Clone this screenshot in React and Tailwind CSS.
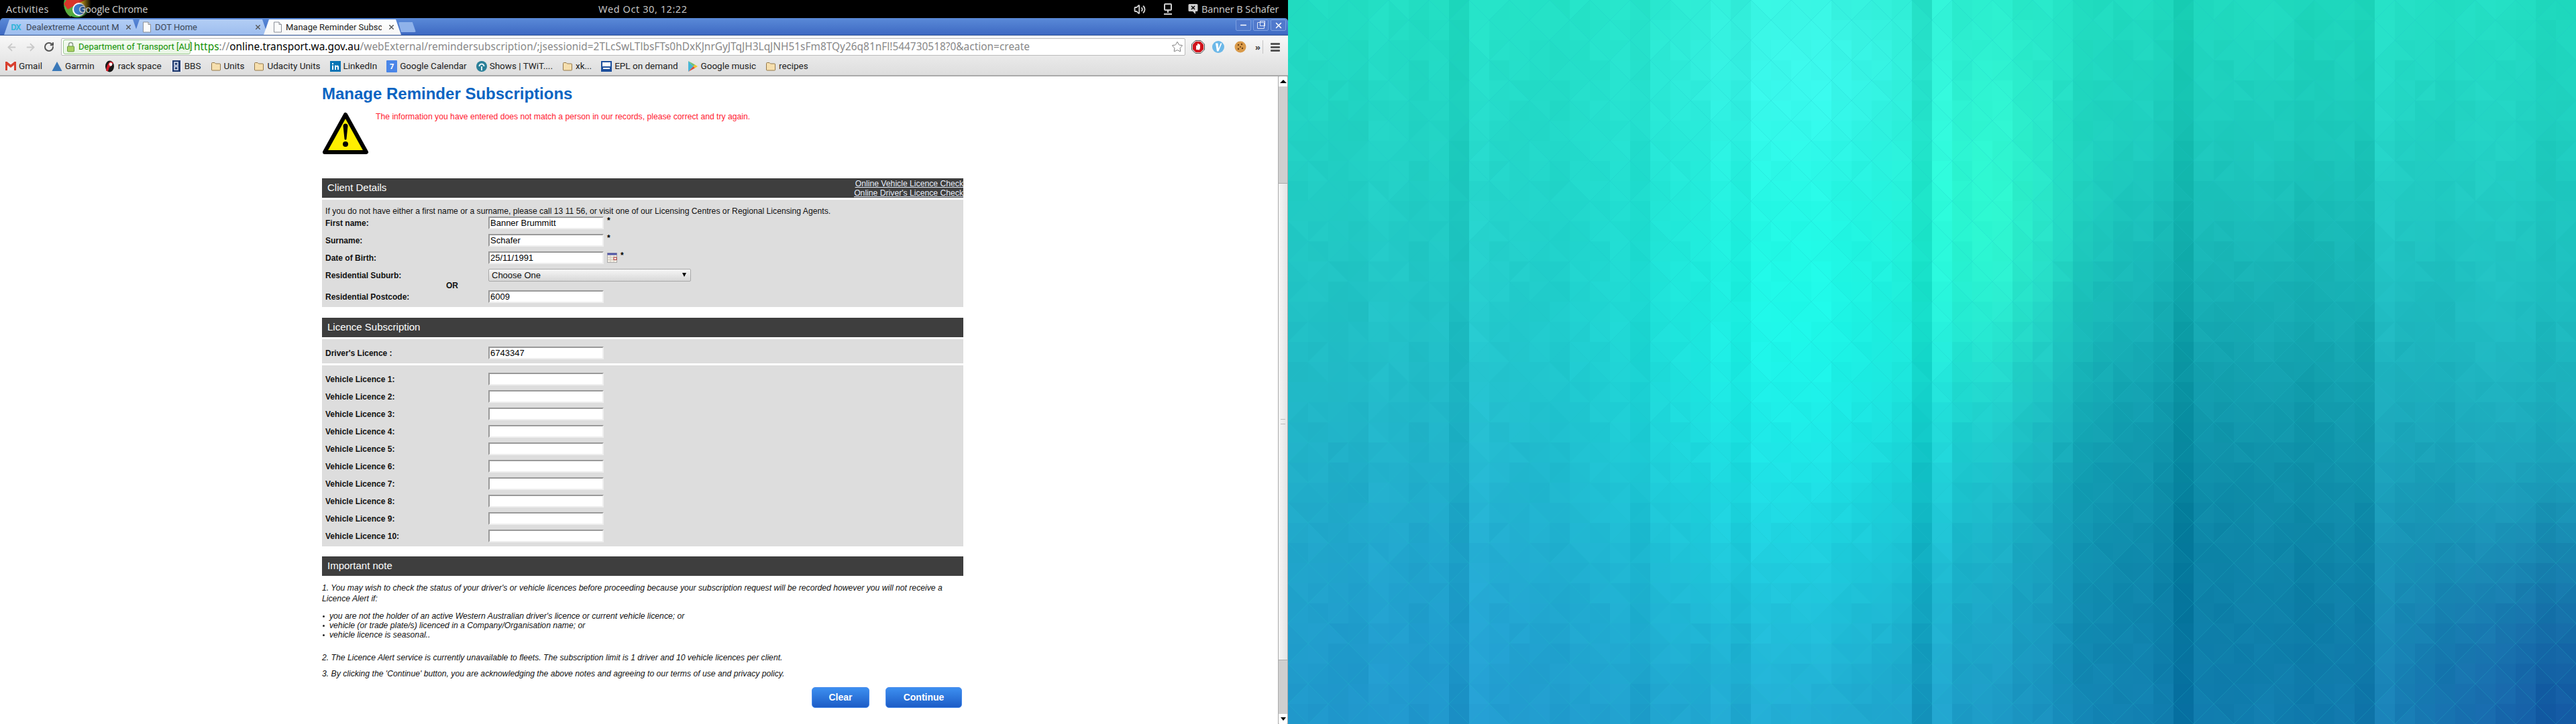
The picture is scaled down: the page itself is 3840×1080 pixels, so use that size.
import { ArrowLeft, ArrowRight, RotateCw, Star, X, Minus, Volume2 } from "lucide-react";

const COLUMN_SHADE = [0, 0, -1, -1, 3, 2, -1, 1, -7, 8, 4, 3, 2, 0, 2, 2, 3, -3, 3, 3, 2, 6, -1, 8, 7, 7, 8, 5, 4, 4, 3, -12, 10, 2, 6, 8, 4, 5, 2, -3, -2, -2, 0, -4, -14, -1, -2, -1, 0, -2, -6, -5, -4, -8, 8, 3, 2, 0, 2, 3, 2, 0, -5, -3];

const blob = (u, v, cu, cv, su, sv) => Math.exp(-((u - cu) ** 2) / (2 * su * su) - ((v - cv) ** 2) / (2 * sv * sv));

function tileColor(x, y, noise) {
  const u = x / 1920;
  const v = y / 1080;
  let r = 34 - 2 * v;
  let g = 222 - 66 * v;
  let b = 194 + 6 * v;
  const add = (amount, dr, dg, db) => {
    r += amount * dr;
    g += amount * dg;
    b += amount * db;
  };
  add(blob(u, v, 0.4, 0.5, 0.11, 0.28), -8, 50, 30);
  add(blob(u, v, 0.4, 0.08, 0.08, 0.12), 24, 8, 24);
  add(blob(u, v, 0.55, 0.33, 0.045, 0.18), 12, 28, 0);
  add(blob(u, v, 0.72, 0.78, 0.13, 0.32), -18, -38, -30);
  add(blob(u, v, 1, 1, 0.09, 0.2), -8, -60, -30);
  add(blob(u, v, 0.1, 0.85, 0.12, 0.2), 0, -8, 6);
  const shade = COLUMN_SHADE[Math.floor(x / 30)] + noise;
  const clamp = (n) => Math.round(Math.max(0, Math.min(255, n)));
  return `rgb(${clamp(r + shade * 0.7)},${clamp(g + shade)},${clamp(b + shade)})`;
}

function Wallpaper() {
  const tiles = [];
  for (let i = 0; i < 64; i++) {
    for (let j = 0; j < 36; j++) {
      const x = i * 30;
      const y = j * 30;
      const n1 = (((i * 7 + j * 13 + i * j * 3) % 9) - 4) * 0.5;
      const n2 = (((i * 11 + j * 5 + i * j * 7) % 9) - 4) * 0.5;
      const cx = x + 15;
      const cy = y + 15;
      const pts = (i + j) % 2 === 0
        ? [`${x},${y} ${x + 30},${y} ${x},${y + 30}`, `${x + 30},${y} ${x + 30},${y + 30} ${x},${y + 30}`]
        : [`${x},${y} ${x + 30},${y} ${x + 30},${y + 30}`, `${x},${y} ${x + 30},${y + 30} ${x},${y + 30}`];
      tiles.push(<polygon key={`${i}-${j}-a`} points={pts[0]} fill={tileColor(cx, cy, n1)} />);
      tiles.push(<polygon key={`${i}-${j}-b`} points={pts[1]} fill={tileColor(cx, cy, n2)} />);
    }
  }
  return (
    <svg width="1920" height="1080" viewBox="0 0 1920 1080" className="block">
      <rect width="1920" height="1080" fill="#20c0c8" />
      {tiles}
    </svg>
  );
}

function FolderIcon() {
  return (
    <svg width="16" height="16" viewBox="0 0 16 16" className="shrink-0">
      <path d="M1.500 3.500a1 1 0 0 1 1-1h3.500l1.500 1.500h6a1 1 0 0 1 1 1v8a1 1 0 0 1-1 1h-11a1 1 0 0 1-1-1z" fill="#f6dfae" stroke="#94784a" />
    </svg>
  );
}

function PageIcon({ className = "" }) {
  return (
    <svg width="14" height="17" viewBox="0 0 14 17" className={`shrink-0 ${className}`}>
      <path d="M1.500 1h7.500l3.500 3.500v11.500h-11z" fill="#fbfbfb" stroke="#8a8f98" />
      <path d="M9 1v3.500h3.500" fill="#e5e5e5" stroke="#8a8f98" />
    </svg>
  );
}

function ChromeLogo() {
  return (
    <svg width="44" height="27" viewBox="0 0 44 27" className="absolute left-[93px] top-0">
      <defs>
        <linearGradient id="logoFade" x1="0" x2="1" y1="0" y2="0">
          <stop offset="0.55" stopColor="#000" stopOpacity="0" />
          <stop offset="0.98" stopColor="#000" stopOpacity="1" />
        </linearGradient>
      </defs>
      <circle cx="22" cy="6" r="20" fill="#49a942" />
      <path d="M25 -14 A20 20 0 0 1 40 15 L26 10 Z" fill="#e8b820" />
      <path d="M3 8 L14 0 L24 0 L24 12 L12 25 A20 20 0 0 1 3 8Z" fill="#59ab3e" />
      <path d="M2 6 L14 -12 L22 -12 L34 0 L22 6 L8 14 Z" fill="#d8352a" />
      <circle cx="25" cy="14" r="10" fill="#fff" />
      <circle cx="25" cy="14" r="8" fill="#3d7ac8" />
      <rect width="44" height="27" fill="url(#logoFade)" />
    </svg>
  );
}

function Tab({ active, width, icon, children, className = "" }) {
  return (
    <div
      className={`relative flex h-[23px] items-center ${width} ${className} ${active ? "z-10 bg-gradient-to-b from-white to-[#f6f6f6] text-[#222]" : "bg-gradient-to-b from-[#b3ceF5] to-[#9dbdee] text-[#3c4756]"} [clip-path:polygon(0_100%,8px_0,calc(100%-8px)_0,100%_100%)]`}
    >
      {icon}
      <span className="ml-[5px] min-w-0 flex-1 overflow-hidden whitespace-nowrap font-['Roboto',sans-serif] text-[13px] leading-[23px]">{children}</span>
      <X size={11} strokeWidth={3} className="mx-[9px] shrink-0 text-[#555]" />
    </div>
  );
}

function Bookmark({ icon, children }) {
  return (
    <div className="flex items-center gap-[4px]">
      {icon}
      <span className="whitespace-nowrap font-['Roboto',sans-serif] text-[13.5px] text-[#222]">{children}</span>
    </div>
  );
}

function BrowserChrome() {
  return (
    <div className="shrink-0 font-['Noto_Sans',sans-serif]">
      {/* tab strip */}
      <div className="flex h-[26px] items-end rounded-t-[5px] border-b border-[#2d5192] bg-gradient-to-b from-[#5a8ad8] to-[#3e69c2] pl-[6px]">
        <Tab
          width="w-[200px]"
          icon={<span className="ml-[10px] w-[18px] shrink-0 text-[12px] font-bold leading-none tracking-[-1px] text-[#35b5d8]">DX</span>}
        >
          Dealextreme Account Ma
        </Tab>
        <Tab width="w-[199px] -ml-[6px]" icon={<PageIcon className="ml-[12px]" />}>DOT Home</Tab>
        <Tab active width="w-[205px] -ml-[6px]" icon={<PageIcon className="ml-[14px]" />}>Manage Reminder Subscr</Tab>
        <div className="ml-[-4px] mb-[4px] h-[15px] w-[26px] rounded-[2px] bg-[#8fb2ea] [clip-path:polygon(0_0,80%_0,100%_100%,15%_100%)]" />
        <div className="mb-[6px] ml-auto mr-[3px] flex gap-[3px] self-end">
          {[
            <Minus key="min" size={13} strokeWidth={3} />,
            <span key="max" className="relative block h-[10px] w-[11px] rounded-[1px] border border-white/80 after:absolute after:-right-[2px] after:-top-[3px] after:h-[8px] after:w-[8px] after:border after:border-white/80" />,
            <X key="close" size={14} strokeWidth={2.5} />
          ].map((glyph, i) => (
            <div key={i} className="flex h-[17px] w-[23px] items-center justify-center rounded-[2px] border border-[#7b9ee0] bg-[#5079cc] text-white">
              {glyph}
            </div>
          ))}
        </div>
      </div>

      <div className="bg-gradient-to-b from-[#f8f8f8] to-[#dcdcdc]">
        {/* toolbar */}
        <div className="flex h-[32px] items-center pt-[2px]">
          <ArrowLeft size={17} strokeWidth={2.5} className="ml-[9px] text-[#c9c9c9]" />
          <ArrowRight size={17} strokeWidth={2.5} className="ml-[11px] text-[#c9c9c9]" />
          <RotateCw size={16} strokeWidth={3} className="ml-[11px] text-[#555]" />
          <div className="ml-[10px] flex h-[26px] w-[1676px] items-center overflow-hidden rounded-[2px] border border-[#bbb] bg-white pl-[2px]">
            <div className="flex h-[22px] w-[190px] shrink-0 items-center rounded-[3px] border border-[#9dcb91] bg-gradient-to-b from-[#f4fbf2] to-[#e8f5e4]">
              <svg width="13" height="16" viewBox="0 0 13 16" className="ml-[4px] shrink-0">
                <path d="M3.500 7V4.500a3 3 0 0 1 6 0V7" fill="none" stroke="#8a9a8a" strokeWidth="1.500" />
                <rect x="1.500" y="7" width="10" height="8" rx="1" fill="#a8d060" stroke="#6a9a40" />
              </svg>
              <span className="ml-[5px] whitespace-nowrap font-['Roboto',sans-serif] text-[13px] text-[#0f9000]">Department of Transport [AU]</span>
            </div>
            <div className="ml-[5px] whitespace-nowrap text-[15.4px] tracking-[0.02px] text-[#888]">
              <span className="text-[#0f9000]">https</span>://<span className="text-black">online.transport.wa.gov.au</span>/webExternal/remindersubscription/;jsessionid=2TLcSwLTlbsFTs0hDxKJnrGyJTqJH3LqJNH51sFm8TQy26q81nFl!544730518?0&amp;action=create
            </div>
            <Star size={18} strokeWidth={1.3} className="ml-auto mr-[2px] shrink-0 text-[#777]" />
          </div>
          {/* extension buttons */}
          <svg width="20" height="20" viewBox="0 0 20 20" className="ml-[9px] shrink-0">
            <path d="M6 0.500h8l5.500 5.500v8l-5.500 5.500h-8l-5.500-5.500v-8z" fill="#ddd" stroke="#555" />
            <path d="M6.500 2h7l4.500 4.500v7l-4.500 4.500h-7l-4.500-4.500v-7z" fill="#d0121b" />
            <path d="M7 14V8.500a1 1 0 0 1 2 0V6a1 1 0 0 1 2 0v1a1 1 0 0 1 2 0v4.500l-1 3z" fill="#fff" />
          </svg>
          <svg width="18" height="18" viewBox="0 0 18 18" className="ml-[11px] shrink-0">
            <circle cx="9" cy="9" r="9" fill="#6cb8e8" />
            <path d="M5 3.500h3.500l1 8 3-8h2l-5 12h-2.500z" fill="#fff" />
          </svg>
          <svg width="18" height="18" viewBox="0 0 18 18" className="ml-[15px] shrink-0">
            <circle cx="9" cy="9" r="8.500" fill="#d99a4a" />
            <circle cx="6" cy="6" r="1.200" fill="#6a3d12" />
            <circle cx="11" cy="5" r="1.200" fill="#6a3d12" />
            <circle cx="12" cy="11" r="1.200" fill="#6a3d12" />
            <circle cx="6" cy="12" r="1.200" fill="#6a3d12" />
            <circle cx="9" cy="9" r="1" fill="#6a3d12" />
          </svg>
          <span className="ml-[13px] text-[13px] font-bold leading-none text-[#444]">»</span>
          <div className="ml-[3px] h-[20px] w-px bg-[#c4c4c4]" />
          <div className="ml-[11px] flex flex-col gap-[2px]">
            <div className="h-[3px] w-[14px] rounded-[1px] bg-[#555]" />
            <div className="h-[3px] w-[14px] rounded-[1px] bg-[#555]" />
            <div className="h-[3px] w-[14px] rounded-[1px] bg-[#555]" />
          </div>
        </div>

        {/* bookmarks bar */}
        <div className="flex h-[29px] items-center gap-[14px] border-b-2 border-[#aaa] pl-[8px]">
          <Bookmark
            icon={
              <svg width="16" height="13" viewBox="0 0 16 13" className="shrink-0">
                <rect width="16" height="13" fill="#eee" />
                <path d="M0 0h2.500l5.500 4.500 5.500-4.500h2.500v13h-3v-8l-5 4-5-4v8h-3z" fill="#d8402f" />
              </svg>
            }
          >
            Gmail
          </Bookmark>
          <Bookmark
            icon={
              <svg width="16" height="16" viewBox="0 0 16 16" className="shrink-0">
                <path d="M8 1l7.500 14h-15z" fill="#3a78b8" />
              </svg>
            }
          >
            Garmin
          </Bookmark>
          <Bookmark
            icon={
              <svg width="17" height="18" viewBox="0 0 17 18" className="shrink-0">
                <ellipse cx="8.500" cy="9" rx="6.500" ry="8.500" fill="#181818" />
                <path d="M10 1.500c-4 2-6 7-7 14l3 1 2-6 3-2 3-5z" fill="#d01f2c" />
                <circle cx="10" cy="6" r="2.400" fill="#fff" />
              </svg>
            }
          >
            rack space
          </Bookmark>
          <Bookmark
            icon={
              <svg width="16" height="17" viewBox="0 0 16 17" className="shrink-0">
                <rect width="16" height="17" fill="#e8eaf2" />
                <rect x="2" y="0" width="12" height="17" fill="#1f3a70" />
                <path d="M5 3h5v4.500h-5zM5 9.500h5v4.500h-5z" fill="none" stroke="#dfe5f2" strokeWidth="1.500" />
              </svg>
            }
          >
            BBS
          </Bookmark>
          <Bookmark icon={<FolderIcon />}>Units</Bookmark>
          <Bookmark icon={<FolderIcon />}>Udacity Units</Bookmark>
          <Bookmark
            icon={
              <svg width="16" height="16" viewBox="0 0 16 16" className="shrink-0">
                <rect width="16" height="16" fill="#0874b5" />
                <path d="M3 6.500h2v6.500h-2zM3 3h2v2h-2zM7 6.500h2v1c1-1.500 4-1.500 4 1.500v4h-2v-3.500c0-1.500-2-1.500-2 0v3.500h-2z" fill="#fff" />
              </svg>
            }
          >
            LinkedIn
          </Bookmark>
          <Bookmark
            icon={
              <div className="flex h-[18px] w-[16px] shrink-0 items-center justify-center rounded-[1px] bg-[#4a86e8] text-[11px] font-bold leading-none text-white">7</div>
            }
          >
            Google Calendar
          </Bookmark>
          <Bookmark
            icon={
              <svg width="16" height="16" viewBox="0 0 16 16" className="shrink-0">
                <circle cx="8" cy="8" r="8" fill="#2a7f98" />
                <path d="M3.500 8a4.500 4.500 0 0 1 9 0h-2a2.500 2.500 0 0 0-5 0zM7 8h2v6h-2z" fill="#e8f4f6" />
              </svg>
            }
          >
            Shows | TWiT....
          </Bookmark>
          <Bookmark icon={<FolderIcon />}>xk...</Bookmark>
          <Bookmark
            icon={
              <svg width="16" height="18" viewBox="0 0 16 18" className="shrink-0">
                <rect y="1" width="16" height="16" fill="#1d4f9c" />
                <rect x="2" y="3" width="12" height="6" fill="#fff" />
                <rect x="3" y="11" width="10" height="2" fill="#fff" />
              </svg>
            }
          >
            EPL on demand
          </Bookmark>
          <Bookmark
            icon={
              <svg width="16" height="18" viewBox="0 0 16 18" className="shrink-0">
                <path d="M1 1l7.500 8-7.500 8z" fill="#45b6d8" />
                <path d="M1 1l10 5.500-2.500 2.500z" fill="#6cc070" />
                <path d="M1 17l10-5.500-2.500-2.500z" fill="#d8483c" />
                <path d="M11 6.500l4 2.500-4 2.500-2.500-2.500z" fill="#f2c230" />
              </svg>
            }
          >
            Google music
          </Bookmark>
          <Bookmark icon={<FolderIcon />}>recipes</Bookmark>
        </div>
      </div>
    </div>
  );
}

function TextBox({ value = "" }) {
  return (
    <input
      readOnly
      defaultValue={value}
      className="h-[19px] w-[172px] shrink-0 border-2 border-t-[#999] border-r-[#eee] border-b-[#eee] border-l-[#999] bg-white pl-[1px] text-[13px] leading-none text-black outline-none"
    />
  );
}

function Required() {
  return <span className="ml-[5px] self-start pt-[2px] text-[12px] font-bold leading-[16px] text-black">*</span>;
}

function FormRow({ label, children }) {
  return (
    <div className="flex h-[26px] items-center pl-[5px]">
      <div className="w-[243px] shrink-0 pt-[1px] text-[12px] font-bold leading-none text-[#111]">{label}</div>
      {children}
    </div>
  );
}

function SectionBar({ title, children }) {
  return (
    <div className="flex h-[29px] items-center justify-between bg-[#3e3e3e] pl-[8px] text-[15px] text-white">
      <span>{title}</span>
      {children}
    </div>
  );
}

function Page() {
  const vehicles = [1, 2, 3, 4, 5, 6, 7, 8, 9, 10];
  return (
    <div className="flex min-h-0 flex-1 bg-white font-['Liberation_Sans',Arial,sans-serif]">
      <main className="flex-1 overflow-hidden pl-[480px]">
        <div className="w-[956px]">
          <h1 className="mt-[12px] text-[24px] font-bold leading-[28px] text-[#0a64c2]">Manage Reminder Subscriptions</h1>
          <div className="mt-[13px] flex h-[99px] items-start">
            <svg width="70" height="64" viewBox="0 0 70 64" className="shrink-0">
              <path d="M35 4 L66 60 H4 Z" fill="#ffee00" stroke="#000" strokeWidth="6" strokeLinejoin="round" />
              <path d="M31.500 21a3.500 3.500 0 0 1 7 0l-2 19a1.500 1.500 0 0 1-3 0z" fill="#000" />
              <circle cx="35" cy="48" r="4" fill="#000" />
            </svg>
            <p className="ml-[10px] text-[12.2px] leading-[14px] text-[#ff2030]">
              The information you have entered does not match a person in our records, please correct and try again.
            </p>
          </div>

          <SectionBar title="Client Details">
            <div className="flex flex-col items-end text-[12.2px] leading-[14px] text-[#e6ecf8] underline">
              <a>Online Vehicle Licence Check</a>
              <a>Online Driver's Licence Check</a>
            </div>
          </SectionBar>
          <div className="mt-[3px] bg-[#ddd] pb-[3px] pt-[12px]">
            <p className="-mb-[1px] h-[10px] pl-[5px] text-[12.2px] leading-[10px] text-[#111]">
              If you do not have either a first name or a surname, please call 13 11 56, or visit one of our Licensing Centres or Regional Licensing Agents.
            </p>
            <FormRow label="First name:">
              <TextBox value="Banner Brummitt" />
              <Required />
            </FormRow>
            <FormRow label="Surname:">
              <TextBox value="Schafer" />
              <Required />
            </FormRow>
            <FormRow label="Date of Birth:">
              <TextBox value="25/11/1991" />
              <svg width="15" height="15" viewBox="0 0 15 15" className="ml-[5px] shrink-0">
                <rect x="0.500" y="0.500" width="14" height="14" fill="#f1ece2" stroke="#aaa" />
                <rect x="0.500" y="0.500" width="14" height="3" fill="#5056a8" />
                <path d="M5 4v10M10 4v10M1 7h13M1 10.500h13" stroke="#cfc8bb" />
                <rect x="10" y="7" width="4" height="3.500" fill="#fff" stroke="#b03030" />
              </svg>
              <Required />
            </FormRow>
            <FormRow label="Residential Suburb:">
              <div className="flex h-[19px] w-[302px] items-center justify-between rounded-[2px] border border-[#a8a8a8] bg-gradient-to-b from-[#f6f6f6] to-[#d8d8d8] pl-[4px] pr-[6px] text-[13px] leading-none text-[#111]">
                Choose One
                <span className="h-0 w-0 border-x-[3px] border-t-[6px] border-x-transparent border-t-black" />
              </div>
            </FormRow>
            <div className="flex h-[6px] items-center pl-[185px] text-[12px] font-bold text-[#111]">OR</div>
            <FormRow label="Residential Postcode:">
              <TextBox value="6009" />
            </FormRow>
          </div>

          <div className="mt-[16px]">
            <SectionBar title="Licence Subscription" />
          </div>
          <div className="mt-[3px] bg-[#ddd] pb-[3px] pt-[7px]">
            <FormRow label="Driver's Licence :">
              <TextBox value="6743347" />
            </FormRow>
          </div>
          <div className="mt-[3px] bg-[#ddd] pb-[3px] pt-[7px]">
            {vehicles.map((n) => (
              <FormRow key={n} label={`Vehicle Licence ${n}:`}>
                <TextBox />
              </FormRow>
            ))}
          </div>

          <div className="mt-[15px]">
            <SectionBar title="Important note" />
          </div>
          <div className="text-[12.2px] italic leading-[16px] text-[#111]">
            <p className="mt-[10px]">
              1. You may wish to check the status of your driver's or vehicle licences before proceeding because your subscription request will be recorded however you will not receive a Licence Alert if:
            </p>
            <ul className="mt-[11px] leading-[14px]">
              {[
                "you are not the holder of an active Western Australian driver's licence or current vehicle licence; or",
                "vehicle (or trade plate/s) licenced in a Company/Organisation name; or",
                "vehicle licence is seasonal.."
              ].map((item) => (
                <li key={item} className="flex items-center">
                  <span className="ml-[1px] mr-[7px] h-[3px] w-[3px] rounded-full bg-[#222]" />
                  {item}
                </li>
              ))}
            </ul>
            <p className="mt-[19px]">
              2. The Licence Alert service is currently unavailable to fleets. The subscription limit is 1 driver and 10 vehicle licences per client.
            </p>
            <p className="mt-[8px]">
              3. By clicking the 'Continue' button, you are acknowledging the above notes and agreeing to our terms of use and privacy policy.
            </p>
          </div>
          <div className="mt-[12px] flex justify-end gap-[24px] pr-[2px]">
            <button className="h-[31px] w-[86px] rounded-[5px] border border-[#4a8cec] bg-gradient-to-b from-[#3d8ff0] to-[#1d5cc6] text-[14px] font-bold text-white">Clear</button>
            <button className="h-[31px] w-[114px] rounded-[5px] border border-[#4a8cec] bg-gradient-to-b from-[#3d8ff0] to-[#1d5cc6] text-[14px] font-bold text-white">Continue</button>
          </div>
        </div>
      </main>

      {/* scrollbar */}
      <div className="flex w-[15px] shrink-0 flex-col border-x border-[#aaa] bg-[#cfcfcf]">
        <div className="flex h-[15px] shrink-0 items-center justify-center rounded-t-[2px] bg-white">
          <span className="h-0 w-0 border-x-[5px] border-b-[5px] border-x-transparent border-b-black" />
        </div>
        <div className="mt-[144px] flex h-[712px] shrink-0 items-center justify-center border-y border-[#aaa] bg-gradient-to-r from-[#f6f6f6] to-[#e4e4e4]">
          <div className="h-[8px] w-[7px] border-y border-[#bbb]" />
        </div>
        <div className="mt-auto flex h-[15px] shrink-0 items-center justify-center rounded-b-[2px] bg-white">
          <span className="h-0 w-0 border-x-[4px] border-t-[5px] border-x-transparent border-t-black" />
        </div>
      </div>
    </div>
  );
}

export default function App() {
  return (
    <div className="flex h-[1080px] w-[3840px] overflow-hidden">
      <div className="flex h-[1080px] w-[1920px] shrink-0 flex-col bg-black">
        {/* desktop top bar */}
        <div className="relative flex h-[27px] shrink-0 items-center font-['Open_Sans',sans-serif] text-[14.5px] tracking-[0.4px] text-[#cfcfcf]">
          <span className="ml-[9px]">Activities</span>
          <ChromeLogo />
          <span className="absolute left-[117px] tracking-[-0.2px]">Google Chrome</span>
          <span className="absolute left-[892px] tracking-[0.6px]">Wed Oct 30, 12:22</span>
          <Volume2 size={18} strokeWidth={2.5} className="absolute left-[1690px] text-[#cfcfcf]" />
          <svg width="14" height="18" viewBox="0 0 14 18" className="absolute left-[1734px]">
            <rect x="2" y="1" width="10" height="9" rx="1" fill="none" stroke="#cfcfcf" strokeWidth="2" />
            <path d="M7 10v4M1 16h12" stroke="#cfcfcf" strokeWidth="2" />
          </svg>
          <svg width="15" height="17" viewBox="0 0 15 17" className="absolute left-[1771px]">
            <path d="M2 1h11a1.500 1.500 0 0 1 1.500 1.500v8a1.500 1.500 0 0 1-1.500 1.500h-2v4l-4-4h-5a1.500 1.500 0 0 1-1.500-1.500v-8a1.500 1.500 0 0 1 1.500-1.500z" fill="#cfcfcf" />
            <path d="M5 4l5 5M10 4l-5 5" stroke="#000" strokeWidth="1.500" />
          </svg>
          <span className="absolute left-[1791px] tracking-[-0.1px]">Banner B Schafer</span>
        </div>
        <BrowserChrome />
        <Page />
      </div>
      <Wallpaper />
    </div>
  );
}
